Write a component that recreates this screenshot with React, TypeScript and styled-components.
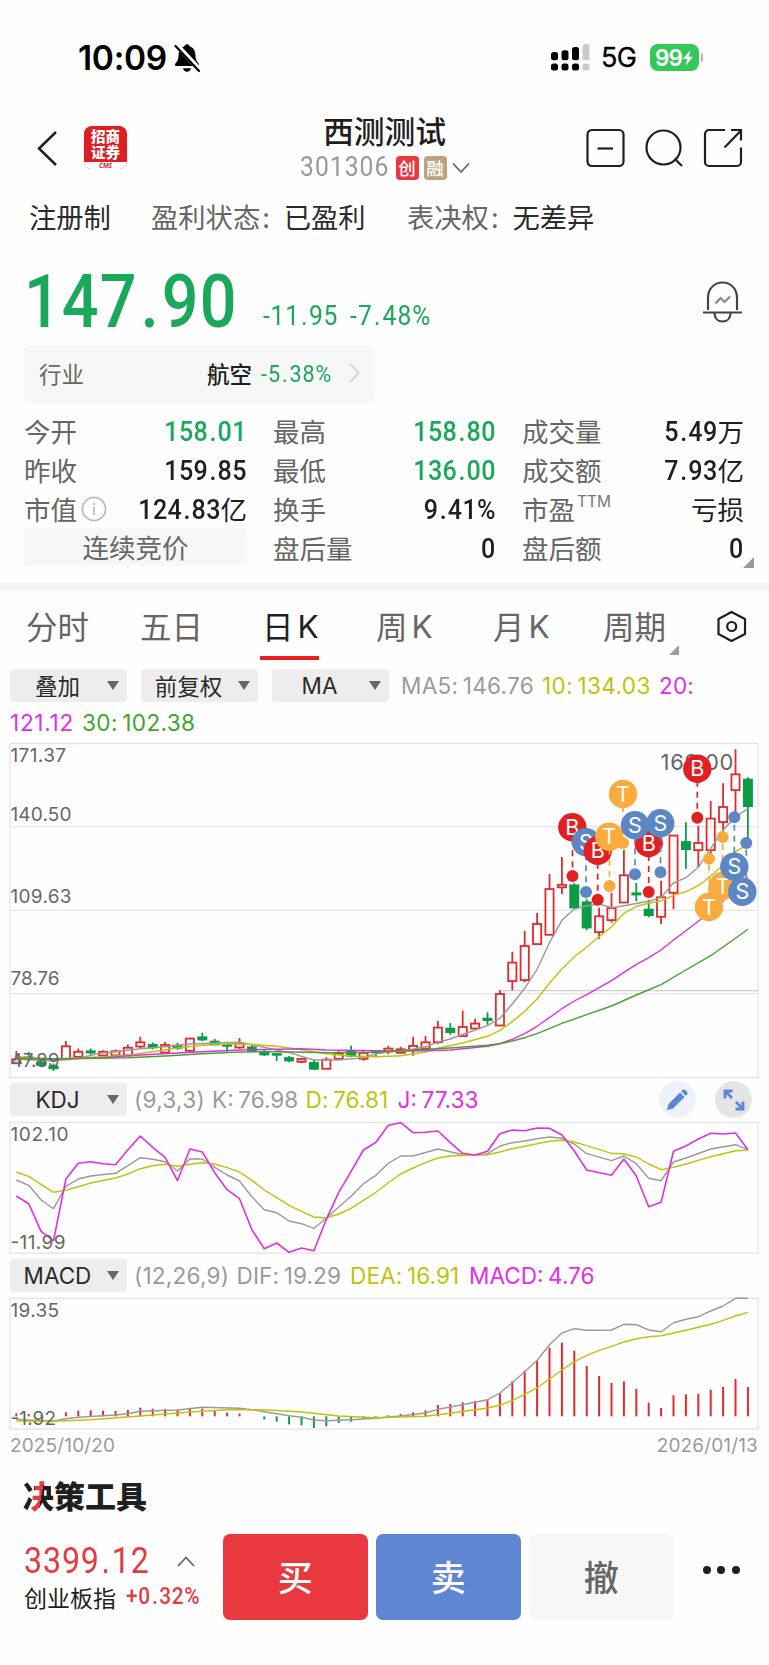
import React from "react";
import styled, { createGlobalStyle } from "styled-components";

const GREEN = "#1aa85a";
const RED = "#e9393e";
const INK = "#1f1f1f";
const LABEL = "#666";
const MA_GRAY = "#999a9c";
const MA_YELLOW = "#c2c20a";
const MA_PINK = "#e22fe6";
const MA_GREEN = "#41a42c";

const Global = createGlobalStyle`
  * { box-sizing: border-box; }
  body { margin: 0; background: #fefefe; }
`;

const Page = styled.main`
  width: 769px;
  height: 1665px;
  overflow: hidden;
  background: #fefefe;
  color: ${INK};
  font-family: "Noto Sans CJK SC", sans-serif;
  display: flex;
  flex-direction: column;
  white-space: nowrap;
`;

/* ---------- numerals ---------- */

// Condensed figures: Roboto narrowed horizontally, anchored to the side it is aligned to.
const Numerals = styled.span<{ $size: number; $color?: string; $weight?: number; $track?: number; $from?: string }>`
  display: inline-block;
  font-family: Roboto, sans-serif;
  font-size: ${(p) => p.$size}px;
  font-weight: ${(p) => p.$weight ?? 500};
  letter-spacing: ${(p) => p.$track ?? 0.015}em;
  color: ${(p) => p.$color ?? "inherit"};
  line-height: 1;
  transform: scaleX(0.88);
  transform-origin: ${(p) => p.$from ?? "left"} center;
`;

const Point = styled.span`
  padding: 0 0.03em 0 0.05em;
`;

type NumProps = { children: string; size: number; color?: string; weight?: number; track?: number; from?: string };

function Num({ children, size, color, weight, track, from }: NumProps) {
  const [whole, frac] = children.split(".");
  return (
    <Numerals $size={size} $color={color} $weight={weight} $track={track} $from={from}>
      {whole}
      {frac !== undefined && <Point>.</Point>}
      {frac}
    </Numerals>
  );
}

/* ---------- status bar ---------- */

const StatusBar = styled.header`
  height: 100px;
  flex: none;
  display: flex;
  align-items: center;
  padding: 15px 66px 0 78px;
  color: #000;
  font-family: Inter, sans-serif;
`;

const Clock = styled.span`
  font-size: 33.500px;
  font-weight: 600;
  letter-spacing: -0.3px;
  line-height: 40px;
  width: 94px;
`;

const StatusRight = styled.div`
  margin-left: auto;
  display: flex;
  align-items: center;
`;

const Network = styled.span`
  font-size: 27px;
  font-weight: 400;
  letter-spacing: -0.7px;
  width: 36px;
  margin: 0 13px 0 11px;
  -webkit-text-stroke: 0.3px #000;
`;

const Battery = styled.div`
  width: 49px;
  height: 27px;
  border-radius: 8px;
  background: #34c759;
  color: #fff;
  display: flex;
  align-items: center;
  justify-content: center;
  font-size: 22.500px;
  font-weight: 600;
  letter-spacing: -0.8px;
`;

const BatteryTip = styled.div`
  width: 2px;
  height: 9px;
  margin-left: 2px;
  border-radius: 0 3px 3px 0;
  background: #b5b5b5;
`;

function Status() {
  return (
    <StatusBar>
      <Clock>10:09</Clock>
      <svg width="30" height="30" viewBox="0 0 30 30">
        <path
          d="M15 1.2c1.6 0 2.6 1 2.8 2.3 3.8 1.2 5.4 4.400 5.600 8.300.2 5 1.100 6.400 3.200 8.700.9 1 .5 2.500-.9 2.500H4.300c-1.400 0-1.800-1.500-.9-2.500 2.100-2.300 3-3.700 3.200-8.700.2-3.900 1.800-7.100 5.600-8.300C12.400 2.200 13.400 1.200 15 1.200Z"
          fill="#000"
        />
        <path d="M11 25.200h8c-.5 2.200-2 3.500-4 3.500s-3.500-1.300-4-3.500Z" fill="#000" />
        <path d="M4.500 2 28 27" stroke="#fefefe" strokeWidth="5" />
        <path d="M3.500 3 27 28" stroke="#000" strokeWidth="2.200" strokeLinecap="round" />
      </svg>
      <StatusRight>
        <svg width="39" height="28" viewBox="0 0 39 28">
          {[
            [0, 8],
            [10.5, 6.300],
            [21, 3],
            [31.500, 0],
          ].map(([x, y]) => {
            const fill = x > 30 ? "#cbcbcb" : "#000";
            return (
              <g key={x} fill={fill}>
                <rect x={x} y={y} width="7" height={16.3 - y} rx="2.500" />
                <rect x={x} y="19.500" width="7" height="7" rx="2.500" />
              </g>
            );
          })}
        </svg>
        <Network>5G</Network>
        <Battery>
          99
          <svg width="12" height="18" viewBox="0 0 12 18">
            <path d="M8.500 1 1 10h4.300L3.500 17 11 7.800H6.700Z" fill="#fff" />
          </svg>
        </Battery>
        <BatteryTip />
      </StatusRight>
    </StatusBar>
  );
}

/* ---------- navigation ---------- */

const NavBar = styled.nav`
  height: 95px;
  flex: none;
  display: flex;
  align-items: center;
  padding: 0 26px;
`;

const NavSide = styled.div<{ $end?: boolean }>`
  flex: 1;
  display: flex;
  align-items: center;
  padding-top: ${(p) => (p.$end ? 1 : 0)}px;
  gap: ${(p) => (p.$end ? 19 : 26)}px;
  justify-content: ${(p) => (p.$end ? "flex-end" : "flex-start")};
`;

const BackIcon = styled.svg`
  margin-left: 10px;
`;

const BrokerLogo = styled.div`
  width: 43px;
  height: 43px;
  border-radius: 8px;
  overflow: hidden;
  background: #dc1f24;
  color: #fff;
  text-align: center;
  box-shadow: 0 0 1px #ccc;
`;

const BrokerName = styled.div`
  height: 36px;
  padding-top: 2px;
  overflow: hidden;
  font-size: 14.5px;
  font-weight: 900;
  line-height: 16px;
`;

const BrokerCode = styled.div`
  height: 7px;
  background: #fff;
  color: #dc1f24;
  font: italic 700 6.500px/7px "Open Sans", sans-serif;
`;

const Heading = styled.div`
  display: flex;
  flex-direction: column;
  align-items: center;
`;

const StockName = styled.h1`
  margin: 0 0 4px;
  font-size: 30.800px;
  line-height: 36px;
  font-weight: 500;
`;

const StockMeta = styled.div`
  display: flex;
  align-items: center;
  gap: 5px;
  height: 32px;
`;

const StockCode = styled.span`
  width: 91px;
  height: 29px;
  display: flex;
`;

const Tag = styled.span<{ $bg: string }>`
  width: 23px;
  height: 24px;
  border-radius: 4px;
  background: ${(p) => p.$bg};
  color: #fff;
  font-size: 17.500px;
  line-height: 23px;
  font-weight: 500;
  text-align: center;
`;

function Nav() {
  return (
    <NavBar>
      <NavSide>
        <BackIcon width="22" height="36" viewBox="0 0 22 36" fill="none" stroke={INK} strokeWidth="2.500">
          <path d="M20 2 3 18.500 20 35" />
        </BackIcon>
        <BrokerLogo>
          <BrokerName>
            招商
            <br />
            证券
          </BrokerName>
          <BrokerCode>CMS</BrokerCode>
        </BrokerLogo>
      </NavSide>
      <Heading>
        <StockName>西测测试</StockName>
        <StockMeta>
          <StockCode>
            <Num size={28} color="#999" weight={400} track={0.042}>
              301306
            </Num>
          </StockCode>
          <Tag $bg={RED}>创</Tag>
          <Tag $bg="#bda27c">融</Tag>
          <svg width="18" height="12" viewBox="0 0 18 12" fill="none" stroke="#666" strokeWidth="1.800">
            <path d="m1 1.500 8 8.500 8-8.500" />
          </svg>
        </StockMeta>
      </Heading>
      <NavSide $end>
        <svg width="40" height="40" viewBox="0 0 40 40" fill="none" stroke={INK} strokeWidth="2.200">
          <rect x="2.500" y="2" width="36" height="36" rx="4.500" />
          <path d="M12.500 20.500h15.500" />
        </svg>
        <svg width="40" height="40" viewBox="0 0 40 40" fill="none" stroke={INK} strokeWidth="2.200">
          <circle cx="19.500" cy="19.500" r="17" />
          <path d="m30.500 30.500 7.500 7.500" />
        </svg>
        <svg width="40" height="40" viewBox="0 0 40 40" fill="none" stroke={INK} strokeWidth="2.200">
          <path d="M22 2H6a4 4 0 0 0-4 4v28a4 4 0 0 0 4 4h28a4 4 0 0 0 4-4V19.500" />
          <path d="M21.500 19.500 38 2.500M28 2h10v10.500" />
        </svg>
      </NavSide>
    </NavBar>
  );
}

/* ---------- listing facts ---------- */

const Facts = styled.section`
  height: 46px;
  flex: none;
  display: flex;
  align-items: center;
  padding: 0 0 4px 29px;
  font-size: 27.300px;
`;

const Fact = styled.div<{ $w: number }>`
  width: ${(p) => p.$w}px;
  display: flex;
  gap: 14px;
  color: #2b2b2b;
`;

const FactLabel = styled.span`
  color: ${LABEL};
  display: flex;
  gap: 2px;
`;

/* ---------- quote ---------- */

const Quote = styled.section`
  height: 342px;
  flex: none;
  padding: 19px 25px 0 24px;
`;

const PriceRow = styled.div`
  height: 85px;
  display: flex;
  align-items: flex-end;
  padding: 0 1px 0 0;
`;

const Change = styled.div<{ $w: number }>`
  width: ${(p) => p.$w}px;
  height: 43px;
`;

const BigPrice = styled.div`
  width: 239px;
  height: 79px;
`;

const Alarm = styled.div`
  margin-left: auto;
  height: 64px;
`;

const Industry = styled.div`
  width: 351px;
  height: 58px;
  border-radius: 6px;
  background: #f7f7f7;
  display: flex;
  align-items: center;
  padding: 0 15px 2px 15px;
  font-size: 22.5px;
  font-weight: 500;
`;

const IndustryLabel = styled.span`
  flex: 1;
  color: ${LABEL};
  font-weight: 400;
`;

const IndustryChange = styled.span`
  width: 71px;
  margin: 2px 17px 0 9px;
  height: 25px;
  display: flex;
`;

const Stats = styled.div`
  margin-top: 8px;
  display: grid;
  grid-template-columns: 223px 223px 222px;
  column-gap: 26px;
  grid-auto-rows: 39px;
`;

const Stat = styled.div<{ $color?: string }>`
  position: relative;
  display: flex;
  align-items: center;
  justify-content: space-between;
  font-size: 26.500px;
  color: ${(p) => p.$color ?? INK};
`;

const StatLabel = styled.span`
  color: ${LABEL};
  display: flex;
  align-items: center;
  gap: 4px;
`;

const Superscript = styled.sup`
  font: 400 15.500px/16px Inter, sans-serif;
  letter-spacing: 0;
  margin: -14px 0 0 -2px;
  color: #777;
`;

const Phase = styled.div`
  height: 38px;
  background: #f7f7f7;
  border-radius: 3px;
  color: ${LABEL};
  font-size: 26.500px;
  line-height: 38px;
  text-align: center;
`;

const Corner = styled.i<{ $size: number; $right: number; $bottom: number; $color: string }>`
  position: absolute;
  right: ${(p) => p.$right}px;
  bottom: ${(p) => p.$bottom}px;
  border-left: ${(p) => p.$size}px solid transparent;
  border-bottom: ${(p) => p.$size}px solid ${(p) => p.$color};
`;

const StatValue = styled.span`
  display: flex;
  align-items: center;
`;

const StatFigure = styled.span`
  display: flex;
  padding-top: 4px;
`;

type StatDef = { label: string; value?: string; unit?: string; color?: string; info?: boolean; ttm?: boolean; corner?: boolean };

const STATS: (StatDef | "phase")[] = [
  { label: "今开", value: "158.01", color: GREEN },
  { label: "最高", value: "158.80", color: GREEN },
  { label: "成交量", value: "5.49", unit: "万" },
  { label: "昨收", value: "159.85" },
  { label: "最低", value: "136.00", color: GREEN },
  { label: "成交额", value: "7.93", unit: "亿" },
  { label: "市值", value: "124.83", unit: "亿", info: true },
  { label: "换手", value: "9.41%" },
  { label: "市盈", unit: "亏损", ttm: true },
  "phase",
  { label: "盘后量", value: "0" },
  { label: "盘后额", value: "0", corner: true },
];

function QuotePanel() {
  return (
    <Quote>
      <PriceRow>
        <BigPrice>
          <Num size={73.5} color={GREEN} track={0.017}>
            147.90
          </Num>
        </BigPrice>
        <Change $w={87}>
          <Num size={28} color={GREEN} weight={400} track={0.03}>
            -11.95
          </Num>
        </Change>
        <Change $w={100}>
          <Num size={28} color={GREEN} weight={400} track={0.045}>
            -7.48%
          </Num>
        </Change>
        <Alarm>
          <svg width="40" height="42" viewBox="0 0 40 42" fill="none" stroke="#444" strokeWidth="2.200">
            <path d="M5 29V17C5 8 11 1.500 19.500 1.500S34 8 34 17v12" />
            <path d="M0 31.500h39M11.500 32c0 5.500 3.500 8.500 8 8.500s8-3 8-8.500" />
            <path d="m12.500 22.500 5-5.500 4 4 5.500-5.500" stroke="#888" />
          </svg>
        </Alarm>
      </PriceRow>
      <Industry>
        <IndustryLabel>行业</IndustryLabel>
        航空
        <IndustryChange>
          <Num size={24.5} color={GREEN} weight={400} track={0.045}>
            -5.38%
          </Num>
        </IndustryChange>
        <svg width="11" height="20" viewBox="0 0 11 20" fill="none" stroke="#d6d6d6" strokeWidth="2">
          <path d="m1.500 1 8 9-8 9" />
        </svg>
      </Industry>
      <Stats>
        {STATS.map((s) =>
          s === "phase" ? (
            <Phase key={s}>连续竞价</Phase>
          ) : (
            <Stat key={s.label} $color={s.color}>
              <StatLabel>
                {s.label}
                {s.info && (
                  <svg width="26" height="26" viewBox="0 0 26 26" fill="none" stroke="#bdbdbd" strokeWidth="1.800">
                    <circle cx="13" cy="13" r="11.600" />
                    <path d="M13 11v8M13 6.800v2.200" />
                  </svg>
                )}
                {s.ttm && <Superscript>TTM</Superscript>}
              </StatLabel>
              <StatValue>
                {s.value && (
                  <StatFigure>
                    <Num size={28.5} from="right">
                      {s.value}
                    </Num>
                  </StatFigure>
                )}
                {s.unit}
              </StatValue>
              {s.corner && <Corner $size={11} $right={-10} $bottom={-1} $color="#999" />}
            </Stat>
          ),
        )}
      </Stats>
    </Quote>
  );
}

const Divider = styled.div`
  height: 8px;
  flex: none;
  background: #f4f4f4;
`;

/* ---------- period tabs ---------- */

const Tabs = styled.nav`
  height: 73px;
  flex: none;
  display: flex;
  align-items: flex-start;
  padding-left: 26px;
`;

const Tab = styled.div<{ $w: number; $on?: boolean }>`
  width: ${(p) => p.$w}px;
  height: 69px;
  font-size: 31.500px;
  line-height: 69px;
  color: ${(p) => (p.$on ? "#222" : LABEL)};
`;

const TabText = styled.span<{ $on?: boolean }>`
  position: relative;
  display: inline-flex;
  gap: 4px;
  height: 68.500px;
  padding: 0 ${(p) => (p.$on ? 1 : 0)}px 0 ${(p) => (p.$on ? 2 : 0)}px;
  border-bottom: 4px solid ${(p) => (p.$on ? "#ec1f1f" : "transparent")};
`;

const Latin = styled.span`
  font-family: Inter, sans-serif;
  font-size: 31.500px;
  line-height: 72px;
  font-weight: 400;
  width: 20px;
`;

const TABS = [
  { text: "分时", w: 114 },
  { text: "五日", w: 120 },
  { text: "日", k: true, on: true, w: 116 },
  { text: "周", k: true, w: 117 },
  { text: "月", k: true, w: 110 },
  { text: "周期", w: 114, corner: true },
];

function PeriodTabs() {
  return (
    <Tabs>
      {TABS.map((t) => (
        <Tab key={t.text} $w={t.w} $on={t.on}>
          <TabText $on={t.on}>
            {t.text}
            {t.k && <Latin>K</Latin>}
            {t.corner && <Corner $size={10} $right={-13} $bottom={1} $color="#98a0a6" />}
          </TabText>
        </Tab>
      ))}
      <svg width="30" height="70" viewBox="0 0 30 70" fill="none" stroke={INK} strokeWidth="2.200">
        <path d="M14.500 21 28 28v15L14.500 50 1.500 43V28Z" strokeLinejoin="round" />
        <circle cx="14.700" cy="35.500" r="4.500" />
      </svg>
    </Tabs>
  );
}

/* ---------- indicator bars ---------- */

const IndicatorBar = styled.div<{ $h: number; $pt: number }>`
  height: ${(p) => p.$h}px;
  flex: none;
  display: flex;
  align-items: flex-start;
  padding: ${(p) => p.$pt}px 0 0 10px;
`;

const Picker = styled.button<{ $gap: number; $latin?: boolean }>`
  width: 117px;
  height: 33px;
  flex: none;
  margin: 0 ${(p) => p.$gap}px 0 0;
  padding: 0 8px;
  border: 0;
  border-radius: 4px;
  background: #ededed;
  color: #2b2b2b;
  display: flex;
  align-items: center;
  font: 400 22.500px/33px ${(p) => (p.$latin ? "Inter" : '"Noto Sans CJK SC"')}, sans-serif;
`;

const PickerText = styled.span`
  flex: 1;
  height: 34px;
  text-align: center;
  margin-left: -11px;
  margin-right: -1px;
`;

const Readout = styled.span<{ $color: string; $w: number; $track: number }>`
  width: ${(p) => p.$w}px;
  flex: none;
  color: ${(p) => p.$color};
  font: 400 22.600px/33px Inter, sans-serif;
  letter-spacing: ${(p) => p.$track}px;
  display: flex;
  gap: 4.500px;
`;

const Pick = ({ children, gap, latin }: { children: string; gap: number; latin?: boolean }) => (
  <Picker $gap={gap} $latin={latin}>
    <PickerText>{children}</PickerText>
    <svg width="12" height="9" viewBox="0 0 12 9">
      <path d="M0 0h12L6 9Z" fill="#666" />
    </svg>
  </Picker>
);

type ReadProps = { name: string; value?: string; color: string; w: number; track?: number };

const Read = ({ name, value, color, w, track = 0.1 }: ReadProps) => (
  <Readout $color={color} $w={w} $track={track}>
    <span>{name}</span>
    {value && <span>{value}</span>}
  </Readout>
);

const RoundButton = styled.button<{ $bg: string; $ml: string }>`
  width: 37px;
  height: 37px;
  flex: none;
  border: 0;
  padding: 0;
  border-radius: 50%;
  margin: -2px 0 0 ${(p) => p.$ml};
  background: ${(p) => p.$bg};
  display: grid;
  place-items: center;
`;

/* ---------- charts ---------- */

const Plot = styled.svg`
  display: block;
  flex: none;
`;

const STEP = 12.4;
const px = (i: number) => 16.3 + i * STEP;

// Series values are vertical offsets in third-pixels from the plot's top edge.
type Series = [number, number][];

const Curve = ({ data, color, w = 1.4 }: { data: Series; color: string; w?: number }) => (
  <polyline
    points={data.map(([i, v]) => `${px(i).toFixed(1)},${(v / 3).toFixed(1)}`).join(" ")}
    fill="none"
    stroke={color}
    strokeWidth={w}
    strokeLinejoin="round"
  />
);

const AxisText = ({ x = 10.5, y, w, children }: { x?: number; y: number; w: number; children: string }) => (
  <text x={x} y={y} textLength={w} fontFamily="Inter, sans-serif" fontSize="19" fill="#666">
    {children}
  </text>
);

// [high, body top, body bottom, low, rising]
const CANDLES: [number, number, number, number, 0 | 1][] = [
  [311, 319, 323.500, 323.500, 1], [312, 317, 319.500, 320, 0], [318.500, 322, 325, 326.500, 0], [323.500, 326, 328.500, 331, 0],
  [301, 306, 319.500, 319.500, 1], [308.500, 311.500, 317, 317, 1], [308.500, 311, 312.700, 314.500, 0], [310.500, 311.500, 315.700, 315.700, 1],
  [309.500, 311, 315.500, 315.500, 1], [304.500, 307.500, 315.500, 315.500, 1], [296.700, 302, 306.700, 308.500, 1], [302.500, 304.500, 307.500, 309.500, 0],
  [302, 304.700, 312.700, 312.700, 1], [302.700, 305.300, 308, 310, 0], [297.700, 298.300, 311, 312, 1], [292.700, 297, 299.700, 301, 0],
  [299, 301.300, 304.700, 305, 0], [301.700, 304.700, 305.700, 312.700, 0], [298, 303.300, 307.700, 308.700, 1], [305.300, 307, 311.300, 312.300, 0],
  [310, 311.700, 314.700, 316, 0], [313.300, 313.700, 315, 321, 0], [316, 317.700, 320.700, 322.300, 0], [317.700, 318.700, 322, 323.300, 1],
  [320, 322.700, 329, 330, 0], [317.300, 319.300, 329, 329, 1], [310.700, 313.300, 319, 319, 1], [305.700, 310.700, 316, 317.300, 0],
  [311.300, 312.700, 319, 320.700, 1], [310.700, 311.300, 312.500, 317.300, 0], [305.700, 308.300, 311.700, 314.300, 1], [306.700, 309, 313, 313, 1],
  [296.700, 305.700, 310, 315.700, 1], [296, 302, 308.700, 308.700, 1], [281, 287.300, 302.300, 304, 1], [283, 288.300, 292.300, 294.700, 0],
  [270.700, 286.700, 296.300, 296.300, 1], [278.700, 283.300, 288.700, 288.700, 1], [272.300, 278.300, 280.300, 284.700, 0], [250.300, 253.700, 285.700, 285.700, 1],
  [211.700, 222.300, 241.300, 250.300, 1], [191, 205.700, 240.300, 242, 1], [173, 183.700, 204.300, 204.300, 1], [134, 148.700, 195, 195, 1],
  [117, 144.500, 147.500, 154, 1], [143.300, 145, 167.700, 169, 0], [159.300, 162, 187.700, 190, 0], [167.700, 176, 192.300, 198.700, 1],
  [153, 167.700, 180.300, 182.700, 1], [110, 135, 162.700, 162.700, 1], [143, 153, 154.700, 161.300, 0], [159.700, 169.300, 175.300, 177.300, 0],
  [140.700, 157, 177, 184, 1], [95, 95.300, 153, 169.300, 1], [82.300, 101.700, 109.300, 128.700, 0], [85.700, 102.700, 110.300, 127.300, 1],
  [61, 78.300, 110.300, 115, 1], [43.300, 66.700, 82.300, 93, 1], [9.300, 34, 50.300, 72, 1], [37.300, 39.300, 66.300, 100, 0],
];

const MA5: Series = [[0,957],[3,962],[5,955],[6.75,940],[8,935],[10,926],[12,920],[14,912],[18,907],[20,922],[22,938],[24,960],[26,960],[28,953],[29,942],[30,935],[32,928],[33,920],[34,907],[35,897],[37,870],[38,857],[39,835],[40,792],[41,745],[42,688],[43,608],[44,541],[45,507],[46,497],[47,492],[48,503],[49,497],[51,484],[52,472],[53,429],[54,413],[55,382],[56,325],[57,270],[58,230],[59,206]];
const MA10: Series = [[0,950],[3,957],[7,950],[9,946],[11,935],[13,924],[15,916],[17.3,911],[19,913],[21,919],[23,929],[25,941],[27,948],[29,950],[31,947],[32,942],[33,936],[34,925],[36,909],[38,889],[39,871],[40,845],[41,814],[42,777],[43,730],[44,687],[45,650],[46,621],[47,590],[48,560],[49,520],[50,499],[51,490],[52,482],[53,466],[54,455],[55,437],[56,408],[57,375],[58,335],[59,313]];
const MA20: Series = [[0,955],[3,957],[7,953],[10,945],[13,939],[15,935],[18,930],[23,926],[25,930],[29,932],[32,933],[35,930],[38,919],[39,911],[40,898],[41,881],[42,859],[44,806],[45,783],[46,764],[48,722],[49,697],[50,673],[51,653],[52,630],[53,600],[54,572],[56,515],[57,482],[59,412]];
const MA30: Series = [[0,955],[3,957],[9,953],[12,948],[15,941],[18,936],[21,935],[25.5,938],[29,937],[32,930],[35,924],[38,916],[39,911],[40,903],[41,893],[42,881],[44,850],[46,824],[48,798],[50,765],[52,734],[54,690],[56,647],[58,595],[59,568]];

const MARK = { B: "#e32021", S: "#5c87c4", T: "#faab3e" };
// [kind, badge x, badge y, dot x, dot y]
const MARKS: [keyof typeof MARK, number, number, number, number][] = [
  ["B", 572.3, 87.3, 572.500, 136],
  ["S", 586, 102.3, 586, 152],
  ["B", 597.7, 110.7, 597.700, 159.700],
  ["T", 623, 54, 623, 103],
  ["T", 609.3, 96.7, 609.500, 146],
  ["B", 648.7, 103, 648.700, 152],
  ["S", 635, 85.3, 635, 134.300],
  ["S", 660.3, 83.3, 660.500, 132.300],
  ["B", 697.3, 28.7, 697.300, 77.700],
  ["T", 722.7, 146, 722.700, 97],
  ["T", 709, 167, 709, 118.700],
  ["S", 734.3, 126.7, 734.300, 77.300],
  ["S", 742.3, 151.7, 746.300, 103],
];

function PriceChart() {
  return (
    <Plot width="769" height="340" viewBox="0 0 769 340">
      <g stroke="#e4e4e6" strokeWidth="1.300" fill="none">
        <rect x="10" y="3.500" width="748" height="334" />
        <path d="M10 86.700H758M10 170.300H758M10 253.700H758" />
        <path d="M499 250.700H758" stroke="#cfcfd1" />
      </g>
      {CANDLES.map(([hi, top, bot, lo, up], i) => {
        const x = px(i);
        const color = up ? "#e32a2c" : "#0c9c46";
        return (
          <g key={i} stroke={color} strokeWidth="1.800" fill={up ? "none" : color}>
            <path d={`M${x} ${hi}V${top}M${x} ${bot}V${lo}`} />
            <rect x={x - 4.1} y={top + 0.3} width="8.200" height={Math.max(bot - top - 0.5, 0.8)} />
          </g>
        );
      })}
      <Curve data={MA5} color={MA_GRAY} />
      <Curve data={MA10} color={MA_YELLOW} />
      <Curve data={MA20} color={MA_PINK} />
      <Curve data={MA30} color={MA_GREEN} />
      <AxisText y={21.800} w={55.500}>171.37</AxisText>
      <AxisText y={81} w={61}>140.50</AxisText>
      <AxisText y={163} w={61}>109.63</AxisText>
      <AxisText y={245.300} w={49}>78.76</AxisText>
      <AxisText y={327} w={49}>47.89</AxisText>
      <text x="660.500" y="30" textLength="73" fontFamily="Inter, sans-serif" fontSize="22" fill="#666">
        169.00
      </text>
      {MARKS.map(([k, x, y, dx, dy], i) => (
        <g key={i} fill={MARK[k]}>
          <path d={`M${dx} ${y + (dy > y ? 14 : -14)}V${dy}`} stroke={MARK[k]} strokeWidth="1.700" strokeDasharray={dy > y ? "4 5 6 5 6 5" : "6 5"} />
          <circle cx={dx} cy={dy} r="6" />
          <circle cx={x} cy={y} r="14.200" />
          <text x={x} y={y + 7.7} textAnchor="middle" fontFamily="Inter, sans-serif" fontSize="21.500" fill="#fff">
            {k}
          </text>
        </g>
      ))}
    </Plot>
  );
}

const K: Series = [[0,315],[1,331],[2,375],[3,401],[4,334],[5,312],[6,303],[8,295],[9,272],[10,248],[11,253],[12,260],[13,288],[14,252],[15,252],[16,277],[17,300],[18,318],[19,365],[20,404],[21,413],[22,438],[23,446],[24,460],[25,430],[26,396],[27,364],[28,326],[29,301],[30,265],[31,243],[32,243],[34,222],[35,230],[36,239],[37,240],[38,236],[39,213],[40,203],[41,198],[42,191],[43,186],[44,190],[45,207],[46,236],[48,257],[49,243],[50,266],[51,310],[52,317],[53,261],[54,249],[56,222],[58,209],[59,224]];
const D: Series = [[0,291],[1,304],[2,328],[3,352],[4,346],[6,324],[8,309],[9,297],[10,281],[11,272],[12,268],[13,274],[14,268],[15,263],[16,267],[17,278],[18,291],[19,316],[20,345],[21,368],[22,391],[23,409],[24,426],[25,429],[26,417],[27,400],[28,376],[29,352],[30,323],[31,297],[32,279],[33,263],[34,249],[35,243],[36,241],[37,241],[38,239],[39,231],[40,221],[42,206],[43,199],[44,196],[45,201],[46,212],[48,235],[49,237],[50,246],[51,267],[52,284],[53,277],[54,267],[56,245],[58,227],[59,226]];
const J: Series = [[0,363],[1,386],[2,469],[3,497],[4,312],[5,265],[6,260],[7,266],[8,269],[9,224],[10,183],[11,217],[12,247],[13,317],[14,222],[15,231],[16,293],[17,344],[18,371],[19,464],[20,521],[21,504],[22,532],[23,519],[24,527],[25,433],[26,352],[27,289],[28,225],[29,202],[30,151],[31,143],[32,173],[33,172],[34,168],[35,203],[36,235],[37,240],[38,229],[39,176],[40,165],[41,167],[42,159],[43,160],[44,180],[45,228],[46,285],[48,301],[49,252],[50,303],[51,395],[52,382],[53,229],[54,213],[55,192],[56,175],[57,177],[58,174],[59,224]];

function KdjChart() {
  return (
    <Plot width="769" height="135" viewBox="0 45 769 135">
      <rect x="10" y="47.500" width="748" height="130.700" fill="none" stroke="#e4e4e6" strokeWidth="1.300" />
      <Curve data={K} color={MA_GRAY} />
      <Curve data={D} color={MA_YELLOW} />
      <Curve data={J} color={MA_PINK} w={1.600} />
      <AxisText y={66} w={58}>102.10</AxisText>
      <AxisText y={174} w={55}>-11.99</AxisText>
    </Plot>
  );
}

const DIF: Series = [[0,493],[2,497],[3,498],[4,491],[5,487],[8,480],[9,476],[10,469],[13,465],[15,457],[18,460],[19,464],[20,470],[22,482],[23,487],[24,495],[25,497],[27,494],[29,490],[30,486],[31,483],[33,474],[34,463],[35,456],[36,449],[38,434],[39,414],[40,383],[41,350],[42,316],[43,269],[44,234],[45,221],[46,226],[47,226],[48,225],[49,208],[50,209],[51,225],[52,230],[53,203],[54,193],[55,185],[56,168],[57,153],[58,130],[59,130]];
const DEA: Series = [[0,498],[3,499],[6,494],[10,483],[14,471],[17,464],[20,464],[23,471],[26,483],[29,488],[33,484],[35,475],[38,459],[39,451],[40,436],[41,418],[42,398],[43,372],[44,345],[45,320],[46,301],[47,286],[48,274],[49,261],[50,251],[51,245],[52,242],[54,226],[56,208],[57,196],[58,183],[59,172]];
const ZERO = 484;
const BARS = [475,477,481,483,472,467,466,467,468,465,458,461,462,465,461,461,468,473,476,484,493,500,508,511,519,514,504,500,491,488,481,477,472,466,450,447,442,438,436,415,379,347,317,278,263,287,333,363,384,379,402,443,459,421,418,417,404,396,372,396];

function MacdChart() {
  return (
    <Plot width="769" height="136" viewBox="0 41 769 136">
      <rect x="10" y="43.300" width="748" height="130.700" fill="none" stroke="#e4e4e6" strokeWidth="1.300" />
      {BARS.map((v, i) => (
        <path key={i} d={`M${px(i)} ${ZERO / 3}V${v / 3}`} stroke={v <= ZERO ? "#e32a2c" : "#0c9c46"} strokeWidth="2" />
      ))}
      <Curve data={DIF} color={MA_GRAY} />
      <Curve data={DEA} color={MA_YELLOW} />
      <AxisText y={62} w={48.500}>19.35</AxisText>
      <AxisText y={170} w={45.500}>-1.92</AxisText>
    </Plot>
  );
}

const Dates = styled.div`
  height: 30px;
  flex: none;
  display: flex;
  justify-content: space-between;
  padding: 0 11px 0 10px;
  color: #9a9a9a;
  font: 400 19px/28px Inter, sans-serif;
  letter-spacing: 0.15px;
`;

/* ---------- footer ---------- */

const Tools = styled.h2`
  height: 72px;
  flex: none;
  margin: 0;
  padding: 0 0 0 23px;
  font-size: 31px;
  line-height: 66px;
  font-weight: 900;
`;

const Accent = styled.span`
  background: linear-gradient(101deg, ${INK} 38%, ${RED} 38%, ${RED} 58%, ${INK} 58%);
  background-clip: text;
  -webkit-background-clip: text;
  color: transparent;
`;

const TradeBar = styled.footer`
  height: 86px;
  flex: none;
  display: flex;
  gap: 8.500px;
  padding-left: 24px;
`;

const IndexQuote = styled.div`
  width: 190.5px;
  display: flex;
  flex-direction: column;
  padding-top: 8px;
`;

const IndexTop = styled.div`
  height: 39px;
  display: flex;
  align-items: center;
  justify-content: space-between;
  padding-right: 20px;
`;

const IndexBottom = styled.div`
  height: 31px;
  display: flex;
  align-items: center;
  gap: 10px;
  font-size: 23px;
`;

const IndexValue = styled.span`
  width: 130px;
`;

const Trade = styled.button<{ $bg: string; $color?: string }>`
  width: 144.500px;
  height: 86px;
  border: 0;
  padding: 0 0 2px;
  border-radius: 7px;
  background: ${(p) => p.$bg};
  color: ${(p) => p.$color ?? "#fff"};
  font: 500 35px/84px "Noto Sans CJK SC", sans-serif;
`;

const More = styled.div`
  width: 78px;
  height: 72px;
  display: flex;
  align-items: center;
  justify-content: center;
  gap: 6.500px;
`;

const Dot = styled.i`
  width: 8px;
  height: 8px;
  border-radius: 50%;
  background: ${INK};
`;

export default function App() {
  return (
    <Page>
      <Global />
      <Status />
      <Nav />
      <Facts>
        <Fact $w={122}>注册制</Fact>
        <Fact $w={256}>
          <FactLabel>盈利状态<span>:</span></FactLabel>已盈利
        </Fact>
        <Fact $w={220}>
          <FactLabel>表决权<span>:</span></FactLabel>无差异
        </Fact>
      </Facts>
      <QuotePanel />
      <Divider />
      <PeriodTabs />
      <IndicatorBar $h={41} $pt={5}>
        <Pick gap={14}>叠加</Pick>
        <Pick gap={14}>前复权</Pick>
        <Pick gap={12} latin>MA</Pick>
        <Read name="MA5:" value="146.76" color={MA_GRAY} w={141} track={0.25} />
        <Read name="10:" value="134.03" color={MA_YELLOW} w={117} track={0.35} />
        <Read name="20:" color={MA_PINK} w={40} />
      </IndicatorBar>
      <IndicatorBar $h={35} $pt={1}>
        <Read name="121.12" color={MA_PINK} w={72} track={0.7} />
        <Read name="30:" value="102.38" color={MA_GREEN} w={120} track={0.35} />
      </IndicatorBar>
      <PriceChart />
      <IndicatorBar $h={40} $pt={3}>
        <Pick gap={7} latin>KDJ</Pick>
        <Read name="(9,3,3)" color={MA_GRAY} w={78} track={0.25} />
        <Read name="K:" value="76.98" color={MA_GRAY} w={93.5} track={0} />
        <Read name="D:" value="76.81" color={MA_YELLOW} w={92} />
        <Read name="J:" value="77.33" color={MA_PINK} w={100} track={0} />
        <RoundButton $bg="#edf1fa" $ml="161px">
          <svg width="22" height="22" viewBox="0 0 22 22" fill="#5c85d6">
            <path d="M1 21 2.500 15 14 3.500 18.500 8 7 19.500ZM15.200 2.300l1.300-1.300c.8-.8 1.800-.8 2.600 0l1.900 1.900c.8.8.8 1.800 0 2.600l-1.300 1.300Z" />
          </svg>
        </RoundButton>
        <RoundButton $bg="#e5e5e8" $ml="19.500px">
          <svg width="22" height="22" viewBox="0 0 22 22" fill="none" stroke="#5c85d6" strokeWidth="2.800">
            <path d="M2 9.500V2h7.500M2.500 2.500 9 9M20 12.500V20h-7.500M19.500 19.500 13 13" />
          </svg>
        </RoundButton>
      </IndicatorBar>
      <KdjChart />
      <IndicatorBar $h={41} $pt={4}>
        <Pick gap={7} latin>MACD</Pick>
        <Read name="(12,26,9)" color={MA_GRAY} w={102.5} track={0.2} />
        <Read name="DIF:" value="19.29" color={MA_GRAY} w={113.5} />
        <Read name="DEA:" value="16.91" color={MA_YELLOW} w={119} />
        <Read name="MACD:" value="4.76" color={MA_PINK} w={130} track={0} />
      </IndicatorBar>
      <MacdChart />
      <Dates>
        <span>2025/10/20</span>
        <span>2026/01/13</span>
      </Dates>
      <Tools>
        <Accent>决</Accent>策工具
      </Tools>
      <TradeBar>
        <IndexQuote>
          <IndexTop>
            <IndexValue>
              <Num size={36.5} color={RED} weight={400} track={0.028}>
                3399.12
              </Num>
            </IndexValue>
            <svg width="18" height="12" viewBox="0 0 18 12" fill="none" stroke="#666" strokeWidth="1.800">
              <path d="m1 10 8-8.500 8 8.500" />
            </svg>
          </IndexTop>
          <IndexBottom>
            创业板指
            <Num size={23.5} color={RED} weight={500} track={0.04}>
              +0.32%
            </Num>
          </IndexBottom>
        </IndexQuote>
        <Trade $bg={RED}>买</Trade>
        <Trade $bg="#5f86d3">卖</Trade>
        <Trade $bg="#f7f7f7" $color={LABEL}>撤</Trade>
        <More>
          <Dot />
          <Dot />
          <Dot />
        </More>
      </TradeBar>
    </Page>
  );
}
